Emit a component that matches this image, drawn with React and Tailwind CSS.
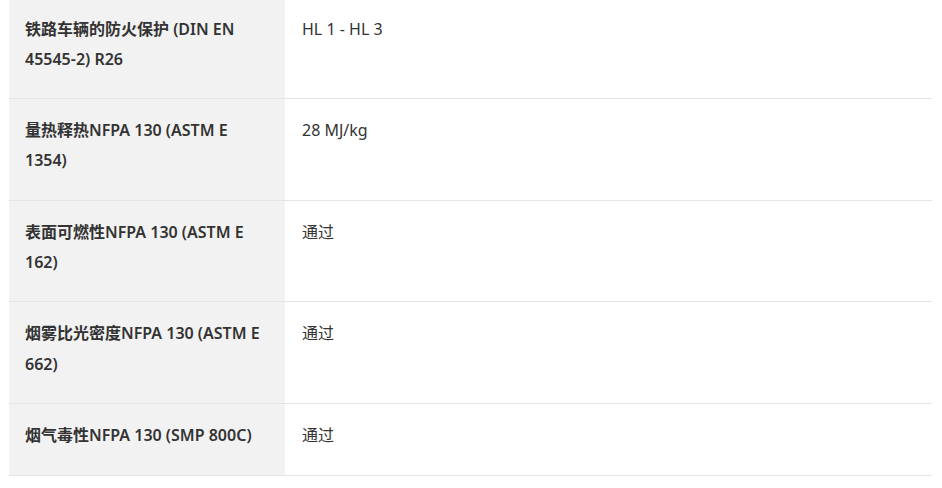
const rows = [
  ["铁路车辆的防火保护 (DIN EN 45545-2) R26", "HL 1 - HL 3"],
  ["量热释热NFPA 130 (ASTM E 1354)", "28 MJ/kg"],
  ["表面可燃性NFPA 130 (ASTM E 162)", "通过"],
  ["烟雾比光密度NFPA 130 (ASTM E 662)", "通过"],
  ["烟气毒性NFPA 130 (SMP 800C)", "通过"],
];

export default function App() {
  return (
    <div
      className="min-h-screen bg-white pl-[9px] pr-[10px] text-[16px] leading-[1.9] text-[#333]"
      style={{ fontFamily: '"Noto Sans", "Noto Sans CJK SC", sans-serif' }}
    >
      <table className="-mt-[2px] w-full border-collapse">
        <tbody>
          {rows.map(([label, value], i) => (
            <tr key={label} className="border-b border-[#e4e4e9]">
              <th
                className={
                  "w-[276px] bg-[#f2f2f2] pl-4 pr-4 pt-4 text-left align-top font-semibold " +
                  (i === 0 ? "pb-[23px]" : "pb-6")
                }
              >
                {label}
              </th>
              <td className="pl-[17px] pr-4 pt-4 text-left align-top font-normal">
                {value}
              </td>
            </tr>
          ))}
        </tbody>
      </table>
    </div>
  );
}
